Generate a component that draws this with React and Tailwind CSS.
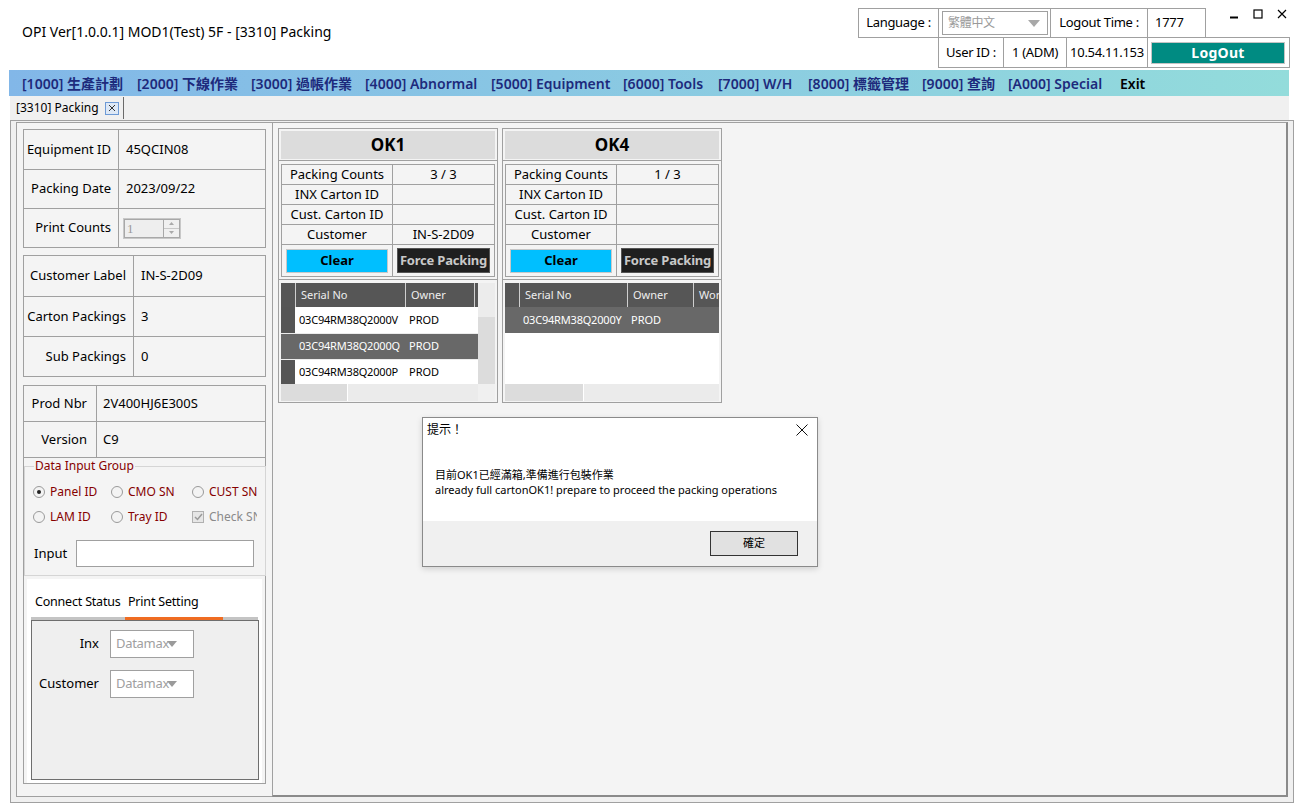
import React from "react";

const MENU = [
  ["[1000] 生產計劃", "w-[115px]"],
  ["[2000] 下線作業", "w-[114px]"],
  ["[3000] 過帳作業", "w-[114px]"],
  ["[4000] Abnormal", "w-[126px]"],
  ["[5000] Equipment", "w-[132px]"],
  ["[6000] Tools", "w-[95px]"],
  ["[7000] W/H", "w-[90px]"],
  ["[8000] 標籤管理", "w-[114px]"],
  ["[9000] 查詢", "w-[86px]"],
  ["[A000] Special", "w-[112px]"],
];

// Key/value box used down the left side
function KvBox({ labelW, rowH, rows, className = "" }) {
  return (
    <div className={`border border-[#a0a0a0] bg-[#f4f4f4] ${className}`}>
      {rows.map(([label, value], i) => (
        <div key={label} className={`flex ${rowH} ${i > 0 ? "border-t border-[#a0a0a0]" : ""}`}>
          <div className={`${labelW} shrink-0 border-r border-[#a0a0a0] flex items-center justify-end pr-[7px] text-[13px]`}>
            {label}
          </div>
          <div className="flex-1 flex items-center pl-[7px] text-[13px]">{value}</div>
        </div>
      ))}
    </div>
  );
}

function Radio({ checked, label }) {
  return (
    <div className="flex items-center gap-[5px] h-[20px]">
      <span className="w-[12px] h-[12px] rounded-full border border-[#9a9a9a] bg-[#f3f3f3] flex items-center justify-center shrink-0">
        {checked && <span className="w-[4px] h-[4px] rounded-full bg-[#222]" />}
      </span>
      <span className="text-[12px] text-[#860000] whitespace-nowrap">{label}</span>
    </div>
  );
}

function Combo({ text }) {
  return (
    <div className="w-[84px] h-[28px] border border-[#a0a0a0] bg-white flex items-center pl-[5px] text-[13px] text-[#a0a0a0]">
      <span className="tracking-[-0.3px]">{text}</span>
      <svg width="10" height="6" viewBox="0 0 10 6" className="-ml-[2px]">
        <path d="M0 0 L10 0 L5 6 Z" fill="#9a9a9a" />
      </svg>
    </div>
  );
}

function OkPanel({ name, count, customer, rows, vscroll, cols }) {
  return (
    <div className="w-[220px] h-[275px] border border-[#a0a0a0] bg-[#f4f4f4] flex flex-col">
      <div className="px-[2px] pt-[2px] pb-[1px] border-b border-[#a0a0a0]">
        <div className="h-[28px] bg-[#dcdcdc] flex items-center justify-center text-[17px] font-bold">{name}</div>
      </div>
      <div className="px-[2px] pt-[3px] pb-[2px] border-b border-[#a0a0a0]">
        <div className="border border-[#a0a0a0] text-[13px]">
          {[
            ["Packing Counts", count],
            ["INX Carton ID", ""],
            ["Cust. Carton ID", ""],
            ["Customer", customer],
          ].map(([l, v]) => (
            <div key={l} className="flex h-[20px] border-b border-[#a0a0a0]">
              <div className="w-[111px] border-r border-[#a0a0a0] flex items-center justify-center">{l}</div>
              <div className="flex-1 flex items-center justify-center">{v}</div>
            </div>
          ))}
          <div className="flex h-[31px]">
            <div className="w-[111px] border-r border-[#a0a0a0] flex items-center pl-[4px]">
              <div className="w-[102px] h-[24px] bg-[#00bfff] border border-[#c8c8c8] flex items-center justify-center font-bold">
                Clear
              </div>
            </div>
            <div className="flex-1 flex items-center pl-[4px]">
              <div className="w-[93px] h-[25px] bg-[#1f1f1f] border border-[#555] flex items-center justify-center font-bold text-[#c8c8c8] whitespace-nowrap tracking-[-0.2px]">
                Force Packing
              </div>
            </div>
          </div>
        </div>
      </div>
      <div className="px-[2px] pt-[3px]">
        <div className="h-[118px] flex flex-col">
          <div className="flex h-[101px]">
            <div className="flex-1 flex flex-col bg-white overflow-hidden">
              <div className="flex h-[24px] bg-[#565656] text-[11px] text-[#eeeeee] shrink-0">
                <div className="w-[14px] shrink-0" />
                <div className={`${cols[0]} shrink-0 border-l border-[#cfcfcf] flex items-center pl-[5px]`}>Serial No</div>
                <div className={`${cols[1]} shrink-0 border-l border-[#cfcfcf] flex items-center pl-[5px]`}>Owner</div>
                <div className="flex-1 border-l border-[#cfcfcf] flex items-center pl-[5px] overflow-hidden whitespace-nowrap">Work</div>
              </div>
              {rows.map(([sn, sel], i) => (
                <div
                  key={sn}
                  className={`flex h-[26px] shrink-0 text-[11px] ${i > 0 ? "border-t border-[#ececec]" : ""} ${sel ? "bg-[#686868] text-white" : "bg-white text-black"}`}
                >
                  <div className={`w-[14px] shrink-0 ${sel ? "bg-[#686868]" : "bg-[#555555]"}`} />
                  <div className={`${cols[0]} shrink-0 flex items-center pl-[4px] whitespace-nowrap tracking-[-0.2px]`}>{sn}</div>
                  <div className={`${cols[1]} shrink-0 flex items-center pl-[4px]`}>PROD</div>
                  <div className="flex-1" />
                </div>
              ))}
            </div>
            {vscroll && (
              <div className="w-[17px] flex flex-col">
                <div className="h-[34px] bg-[#ececec]" />
                <div className="flex-1 bg-[#dcdcdc]" />
              </div>
            )}
          </div>
          <div className="flex h-[17px]">
            <div className={`${vscroll ? "w-[67px]" : "w-[79px]"} bg-[#dcdcdc] border-r border-white`} />
            <div className="flex-1 bg-[#ebebeb]" />
            {vscroll && <div className="w-[17px] bg-[#f0f0f0]" />}
          </div>
        </div>
      </div>
    </div>
  );
}

export default function App() {
  return (
    <div className="relative w-[1299px] h-[808px] bg-white overflow-hidden text-black font-['Noto_Sans','Noto_Sans_CJK_TC',sans-serif]">
      {/* title bar + login info */}
      <div className="flex h-[70px]">
        <div className="pl-[22px] pt-[21px] text-[14px] whitespace-nowrap">
          OPI Ver[1.0.0.1] MOD1(Test) 5F - [3310] Packing
        </div>
        <div className="ml-auto w-[441px] pt-[8px] flex flex-col text-[13px] tracking-[-0.3px]">
          <div className="flex h-[30px]">
            <div className="w-[81px] border border-[#a0a0a0] flex items-center justify-center">Language :</div>
            <div className="w-[113px] -ml-px border border-[#a0a0a0] flex items-center pl-[3px]">
              <div className="w-[106px] h-[24px] border border-[#a0a0a0] flex items-center pl-[5px] text-[12px] text-[#9a9a9a]">
                繁體中文
                <svg width="12" height="7" viewBox="0 0 12 7" className="ml-auto mr-[7px]">
                  <path d="M0 0 L12 0 L6 7 Z" fill="#a8a8a8" />
                </svg>
              </div>
            </div>
            <div className="w-[98px] -ml-px border border-[#a0a0a0] flex items-center justify-center">Logout Time :</div>
            <div className="w-[59px] -ml-px border border-[#a0a0a0] flex items-center pl-[7px]">1777</div>
            <div className="flex-1 flex items-start pt-[1px] pl-[23px] gap-[14px]">
              <svg width="10" height="10" viewBox="0 0 10 10">
                <path d="M1 8.5 H9" stroke="#000" strokeWidth="2" />
              </svg>
              <svg width="10" height="10" viewBox="0 0 10 10">
                <rect x="1" y="1" width="8" height="8" fill="none" stroke="#000" strokeWidth="1.2" />
              </svg>
              <svg width="10" height="10" viewBox="0 0 10 10">
                <path d="M1 1 L9 9 M9 1 L1 9" stroke="#000" strokeWidth="1.2" />
              </svg>
            </div>
          </div>
          <div className="flex h-[31px] -mt-px ml-[80px]">
            <div className="w-[66px] border border-[#a0a0a0] flex items-center justify-center">User ID :</div>
            <div className="w-[64px] -ml-px border border-[#a0a0a0] flex items-center justify-center">1 (ADM)</div>
            <div className="w-[82px] -ml-px border border-[#a0a0a0] flex items-center justify-center">10.54.11.153</div>
            <div className="w-[143px] -ml-px border border-[#a0a0a0] flex items-center pl-[3px]">
              <div className="w-[134px] h-[22px] bg-[#008b82] border border-[#c4c4c4] flex items-center justify-center text-white text-[14px] font-bold tracking-[0.3px]">
                LogOut
              </div>
            </div>
          </div>
        </div>
      </div>

      {/* menu bar */}
      <div className="ml-[9px] w-[1280px] h-[26px] bg-linear-to-r from-[#82b7e8] to-[#93dcdb] flex items-center pl-[13px] text-[14px] font-semibold text-[#1d2a7c]">
        {MENU.map(([t, w]) => (
          <div key={t} className={`${w} shrink-0 whitespace-nowrap`}>{t}</div>
        ))}
        <div className="text-black">Exit</div>
      </div>

      {/* tab strip */}
      <div className="ml-[10px] w-[1279px] h-[24px] bg-[#f0f0f0] flex">
        <div className="w-[114px] h-[22px] mt-px border-r border-[#6a6a6a] flex items-center pl-[6px] text-[12px]">
          [3310] Packing
          <span className="ml-[6px] w-[14px] h-[13px] border border-[#6d9ad6] bg-[#dde8f6] flex items-center justify-center">
            <svg width="8" height="8" viewBox="0 0 8 8">
              <path d="M1 1 L7 7 M7 1 L1 7" stroke="#333" strokeWidth="1" />
            </svg>
          </span>
        </div>
      </div>

      {/* main frame */}
      <div className="ml-[10px] w-[1284px] h-[683px] border border-[#a0a0a0] bg-[#f0f0f0] flex pt-px px-[5px] pb-[5px]">
        {/* left side */}
        <div className="w-[256px] shrink-0 border-l border-t border-b border-[#a0a0a0] bg-[#f4f4f4] pl-[6px] pt-[6px] flex flex-col">
          <KvBox
            labelW="w-[95px]"
            rowH="h-[39px]"
            className="w-[243px]"
            rows={[
              ["Equipment ID", "45QCIN08"],
              ["Packing Date", "2023/09/22"],
              [
                "Print Counts",
                <div key="spin" className="flex h-[21px] -ml-[3px] border border-[#c8c8c8]">
                  <div className="w-[40px] bg-[#eeeeee] border border-[#a8a8a8] text-[13px] text-[#9a9a9a] pl-[2px] leading-[18px] font-['Liberation_Serif',serif]">1</div>
                  <div className="w-[16px] flex flex-col border border-[#a8a8a8] border-l-0">
                    <div className="flex-1 bg-[#f0f0f0] border-b border-[#c8c8c8] flex items-center justify-center">
                      <svg width="5" height="3" viewBox="0 0 5 3"><path d="M0 3 L5 3 L2.5 0 Z" fill="#aaa" /></svg>
                    </div>
                    <div className="flex-1 bg-[#f0f0f0] flex items-center justify-center">
                      <svg width="5" height="3" viewBox="0 0 5 3"><path d="M0 0 L5 0 L2.5 3 Z" fill="#aaa" /></svg>
                    </div>
                  </div>
                </div>,
              ],
            ]}
          />
          <KvBox
            labelW="w-[110px]"
            rowH="h-[40px]"
            className="w-[243px] mt-[7px]"
            rows={[
              ["Customer Label", "IN-S-2D09"],
              ["Carton Packings", "3"],
              ["Sub Packings", "0"],
            ]}
          />
          <div className="w-[243px] mt-[8px] h-[399px] border border-[#a0a0a0] bg-[#f4f4f4] flex flex-col">
            {[
              ["Prod Nbr", "2V400HJ6E300S"],
              ["Version", "C9"],
            ].map(([l, v]) => (
              <div key={l} className="flex h-[36px] border-b border-[#a0a0a0] text-[13px]">
                <div className="w-[73px] border-r border-[#a0a0a0] flex items-center justify-end pr-[9px]">{l}</div>
                <div className="flex-1 flex items-center pl-[6px]">{v}</div>
              </div>
            ))}
            <fieldset className="border border-[#d5d5d5] px-[8px] pb-[8px] -mt-[1px]">
              <legend className="text-[12px] text-[#860000] px-px ml-[1px]">Data Input Group</legend>
              <div className="grid grid-cols-[78px_81px_1fr] gap-y-[5px] pt-[7px] overflow-hidden">
                <Radio checked label="Panel ID" />
                <Radio label="CMO SN" />
                <Radio label="CUST SN" />
                <Radio label="LAM ID" />
                <Radio label="Tray ID" />
                <div className="flex items-center gap-[5px] h-[20px] overflow-hidden whitespace-nowrap">
                  <span className="w-[12px] h-[12px] border border-[#b0b0b0] bg-[#e6e6e6] flex items-center justify-center shrink-0">
                    <svg width="9" height="8" viewBox="0 0 9 8">
                      <path d="M1 4 L3.5 6.5 L8 1" fill="none" stroke="#9a9a9a" strokeWidth="1.5" />
                    </svg>
                  </span>
                  <span className="text-[12px] text-[#8a8a8a]">Check SN</span>
                </div>
              </div>
              <div className="flex items-center mt-[13px] h-[27px]">
                <div className="w-[43px] pl-[1px] text-[13px]">Input</div>
                <div className="w-[178px] h-[27px] border border-[#a0a0a0] bg-white" />
              </div>
            </fieldset>
            <div className="mx-[3px] mt-[3px] flex-1 bg-white flex flex-col">
              <div className="h-[41px] pl-[4px] flex flex-col justify-end">
                <div className="flex text-[12.5px] tracking-[-0.2px] pb-[5px]">
                  <div className="w-[94px] pl-[4px] whitespace-nowrap">Connect Status</div>
                  <div className="w-[98px] pl-[3px] whitespace-nowrap">Print Setting</div>
                </div>
                <div className="flex w-[227px] h-[3px] bg-[#c4c4c4]">
                  <div className="w-[94px]" />
                  <div className="w-[98px] bg-[#ef6c22]" />
                </div>
              </div>
              <div className="ml-[4px] w-[228px] h-[160px] border border-[#6e6e6e] bg-[#efefef] pt-[9px] flex flex-col gap-[12px] text-[13px]">
                <div className="flex items-center">
                  <div className="w-[67px] text-right">Inx</div>
                  <div className="ml-[11px]"><Combo text="Datamax" /></div>
                </div>
                <div className="flex items-center">
                  <div className="w-[67px] text-right">Customer</div>
                  <div className="ml-[11px]"><Combo text="Datamax" /></div>
                </div>
              </div>
            </div>
          </div>
        </div>

        {/* right side */}
        <div className="flex-1 border border-[#a0a0a0] border-r-2 border-b-2 border-r-[#8a8a8a] border-b-[#8a8a8a] bg-[#f4f4f4] pl-[5px] pt-[5px] flex items-start gap-[4px]">
          <OkPanel
            name="OK1"
            count="3 / 3"
            customer="IN-S-2D09"
            vscroll
            cols={["w-[110px]", "w-[69px]"]}
            rows={[
              ["03C94RM38Q2000V", false],
              ["03C94RM38Q2000Q", true],
              ["03C94RM38Q2000P", false],
            ]}
          />
          <OkPanel
            name="OK4"
            count="1 / 3"
            customer=""
            cols={["w-[108px]", "w-[66px]"]}
            rows={[["03C94RM38Q2000Y", true]]}
          />
        </div>
      </div>

      {/* message box */}
      <div className="absolute left-[422px] top-[417px] w-[396px] h-[150px] border border-[#8a8a8a] bg-white flex flex-col shadow-[0_2px_6px_rgba(0,0,0,0.15)]">
        <div className="h-[24px] flex items-center pl-[4px] pr-[9px] text-[12px]">
          提示！
          <svg width="12" height="12" viewBox="0 0 12 12" className="ml-auto">
            <path d="M0.5 0.5 L11.5 11.5 M11.5 0.5 L0.5 11.5" stroke="#111" strokeWidth="1" />
          </svg>
        </div>
        <div className="flex-1 pl-[12px] pt-[25px] text-[11px] leading-[15px]">
          <div>目前OK1已經滿箱,準備進行包裝作業</div>
          <div>already full cartonOK1! prepare to proceed the packing operations</div>
        </div>
        <div className="h-[45px] bg-[#f0f0f0] flex justify-end items-start pt-[10px] pr-[19px]">
          <div className="w-[88px] h-[25px] border border-[#333] bg-[#e1e1e1] flex items-center justify-center text-[11px]">
            確定
          </div>
        </div>
      </div>
    </div>
  );
}
